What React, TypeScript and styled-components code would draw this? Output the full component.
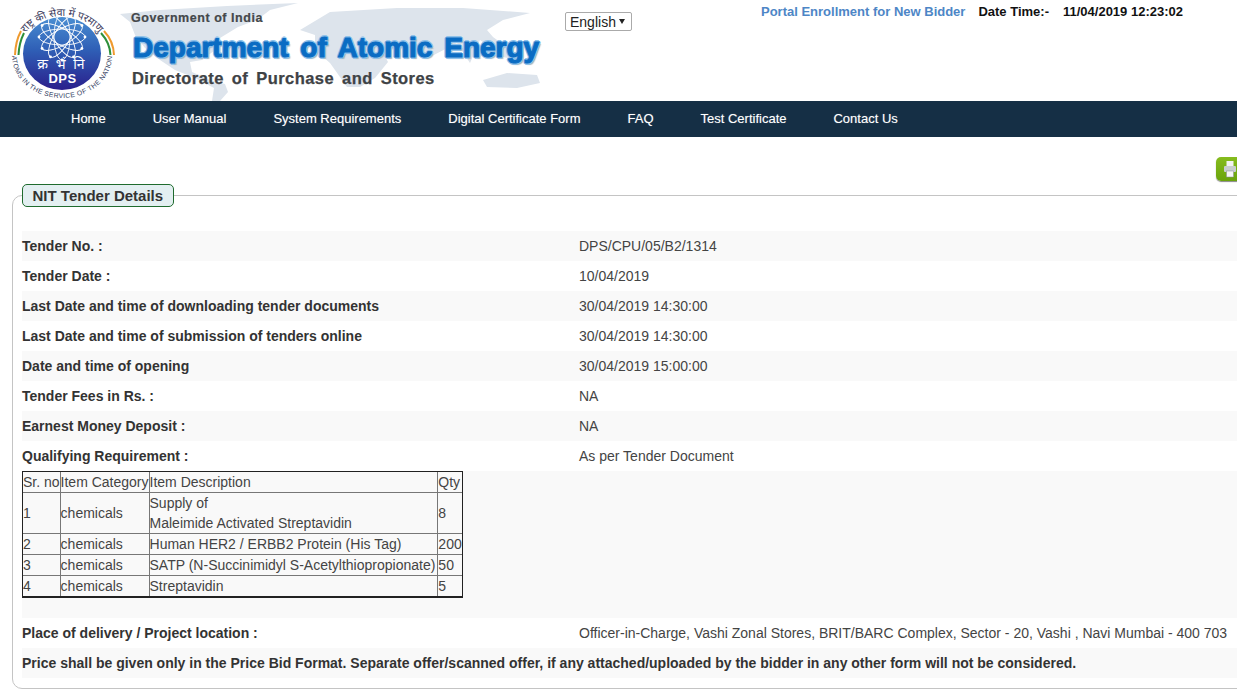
import React from "react";
import styled, { createGlobalStyle } from "styled-components";

const Global = createGlobalStyle`
  html, body { margin: 0; padding: 0; background: #fff; overflow: hidden; }
  body { font-family: "Liberation Sans", Arial, sans-serif; font-size: 14px; line-height: 20px; color: #333; }
`;
const Page = styled.div`width: 1237px; height: 693px; overflow: hidden;`;
const Header = styled.header`display: flex; height: 101px; align-items: flex-start;`;
const LogoBox = styled.div`width: 120px; height: 101px; flex: none;`;
const Brand = styled.div`
  position: relative; width: 430px; height: 101px; flex: none; padding: 9px 0 0 11px; box-sizing: border-box;
  font-family: "Liberation Sans", sans-serif; font-weight: 700;
`;
const MapArt = styled.svg`position: absolute; left: 0; top: 0; width: 430px; height: 101px;`;
const Gov = styled.div`position: relative; font-size: 12.5px; line-height: 18px; color: #44484b; letter-spacing: .55px; -webkit-text-stroke: .2px #44484b;`;
const Dept = styled.div`
  position: relative; margin: 4px 0 0 2px; font-size: 28px; line-height: 34px; color: #0a6cc3; white-space: nowrap; word-spacing: 4px;
  -webkit-text-stroke: 1.1px #0a6cc3;
  text-shadow: 1.6px 0 0 #8fc2ea, -1.6px 0 0 #8fc2ea, 0 1.6px 0 #8fc2ea, 0 -1.6px 0 #8fc2ea, 1.2px 1.2px 0 #8fc2ea, -1.2px 1.2px 0 #8fc2ea, 1.2px -1.2px 0 #8fc2ea, -1.2px -1.2px 0 #8fc2ea, 2px 2px 1px #a9b6c2;
`;
const Dir = styled.div`position: relative; margin: 2px 0 0 1px; font-size: 16.5px; line-height: 22px; color: #3e4245; white-space: nowrap; word-spacing: 3px; letter-spacing: .43px; -webkit-text-stroke: .25px #3e4245;`;
const Lang = styled.select`
  margin: 12px 0 0 15px; flex: none; width: 67px; height: 19px; padding: 0 0 0 4px; font: 14px "Liberation Sans", sans-serif; color: #222; border: 1px solid #aaa; border-radius: 2px;
  appearance: none; background: #fff url("data:image/svg+xml,%3Csvg xmlns='http://www.w3.org/2000/svg' width='6' height='5'%3E%3Cpath d='M0 0h6L3 5z' fill='%23222'/%3E%3C/svg%3E") no-repeat 53px 6px;
`;
const Status = styled.div`
  display: flex; align-items: baseline; margin: 2px 0 0 129px; font-weight: 700; font-size: 13px; color: #111; white-space: nowrap;
`;
const PortalLink = styled.a`color: #4d86c6; margin-right: 13px; font-size: 13px;`;
const StampLabel = styled.span`margin-right: 14px;`;
const Nav = styled.nav`display: flex; height: 36px; background: #152f45; padding-left: 47.5px; align-items: center;`;
const NavItem = styled.a`color: #fff; padding: 0 23.5px; font-size: 13px; white-space: nowrap; text-shadow: 0 0 1px rgba(255,255,255,.4);`;
const PrintRow = styled.div`display: flex; justify-content: flex-end; height: 24px; padding-top: 20px; margin-right: -6px;`;
const PrintBtn = styled.button`
  width: 27px; height: 24px; padding: 0; border: 0; border-radius: 5px; display: flex; align-items: center; justify-content: center;
  background: linear-gradient(#86bc1e, #6aa30c); box-shadow: 0 1px 1px #888;
`;
const Field = styled.fieldset`
  margin: 3px 0 0 12px; padding: 0 0 10px 9px; width: 1260px; box-sizing: border-box; height: 505px;
  border: 1px solid #c4c4c4; border-radius: 10px;
`;
const Legend = styled.legend`
  margin: 0 13px 0 0; padding: 0 9.500px; height: 23px; box-sizing: border-box; border: 1px solid #1f6b2e; border-radius: 5px;
  background: #e3eff1; font-weight: 700; font-size: 15px; line-height: 21px; color: #333;
`;
const Rows = styled.div`margin-top: 24px;`;
const Row = styled.div<{ $shade?: boolean }>`
  display: grid; grid-template-columns: 557px 1fr; min-height: 30px; align-items: center;
  background: ${p => (p.$shade ? "#f9f9f9" : "#fff")}; white-space: nowrap;
`;
const Label = styled.div`font-weight: 700;`;
const Value = styled.div`color: #444;`;
const Notice = styled.div`
  background: #f9f9f9; height: 30px; line-height: 30px; font-weight: 700; font-size: 14px; white-space: nowrap;
`;
const TableBand = styled.div`background: #f9f9f9; height: 147px;`;
const Items = styled.table`
  border-collapse: separate; border-spacing: 0; border: 1px solid #222; border-bottom-width: 2px; color: #444; font-size: 14px; line-height: 20px;
`;
const Cell = styled.td`
  padding: 0; white-space: nowrap; border-right: 1px solid #777; border-bottom: 1px solid #777;
  &:nth-child(3) { padding-right: 2px; }
  &:last-child { border-right: 0; }
  tr:last-child & { border-bottom: 0; }
`;

const RAY = [0, 30, 60, 90, 120, 150];

function Logo() {
  return (
    <svg width="120" height="101" viewBox="0 0 120 101">
      <defs>
        <linearGradient id="disc" x1="0" y1="0" x2="0" y2="1">
          <stop offset="0" stopColor="#4a8ed2" />
          <stop offset=".45" stopColor="#2f5fb6" />
          <stop offset="1" stopColor="#2a1f8c" />
        </linearGradient>
        <path id="topArc" d="M19 52 A43 36 0 0 1 105 52" />
        <path id="botArc" d="M12 56 A50 42 0 0 0 112 56" />
      </defs>
      <ellipse cx="62" cy="53.500" rx="39" ry="36.500" fill="url(#disc)" />
      <g fill="none" stroke="#fff" strokeWidth=".9">
        {RAY.map(a => (
          <ellipse key={a} cx="62" cy="37" rx="23" ry="8" transform={`rotate(${a} 62 37)`} />
        ))}
      </g>
      <g fill="#fff">
        {RAY.flatMap(a => [0, 180].map(b => {
          const t = ((a + b) * Math.PI) / 180;
          return <circle key={a + b} cx={62 + 23 * Math.cos(t)} cy={37 + 23 * Math.sin(t)} r="1.4" />;
        }))}
      </g>
      <g fill="none" strokeWidth="2">
        <path d="M15 55 Q15.500 41 21 31" stroke="#ef9a2e" />
        <path d="M18.500 55 Q19 43 24 33" stroke="#2d8f3a" />
        <path d="M114 55 Q113.500 41 104 31" stroke="#ef9a2e" />
        <path d="M110.500 55 Q110 43 101 33" stroke="#2d8f3a" />
      </g>
      <text x="62" y="69" textAnchor="middle" fill="#fff" fontSize="14" fontFamily="Noto Sans, DejaVu Sans, sans-serif" letterSpacing="2">क्र भं नि</text>
      <text x="62.500" y="83" textAnchor="middle" fill="#fff" fontSize="13" fontWeight="700" letterSpacing=".5" fontFamily="Liberation Sans, sans-serif">DPS</text>
      <text fill="#3b3b5c" fontSize="10.500" fontFamily="Noto Sans, DejaVu Sans, sans-serif">
        <textPath href="#topArc" startOffset="50%" textAnchor="middle">राष्ट्र की सेवा में परमाणु</textPath>
      </text>
      <text fill="#33415f" fontSize="6.800" letterSpacing=".35" fontFamily="Liberation Sans, sans-serif">
        <textPath href="#botArc" startOffset="50%" textAnchor="middle">ATOMS IN THE SERVICE OF THE NATION</textPath>
      </text>
    </svg>
  );
}

function WorldMap() {
  return (
    <MapArt viewBox="0 0 430 101">
      <g fill="#dde4ec">
        <path d="M0 14 L40 10 L107 6 L178 3 L150 10 L137 20 L118 27 L100 38 L95 50 L82 60 L70 62 L72 72 L90 80 L105 84 L108 92 L100 101 L92 101 L94 88 L75 78 L55 70 L40 60 L25 48 L15 35 L10 22 Z" />
        <path d="M180 30 L210 12 L277 8 L343 8 L410 13 L383 20 L367 30 L373 37 L407 62 L383 57 L360 40 L350 63 L337 43 L310 57 L290 48 L262 50 L268 62 L255 78 L240 87 L227 87 L215 70 L210 63 L195 50 L195 35 Z" />
        <path d="M363 80 L387 73 L417 75 L420 83 L397 88 L367 87 Z" />
      </g>
    </MapArt>
  );
}

const MENU = ["Home", "User Manual", "System Requirements", "Digital Certificate Form", "FAQ", "Test Certificate", "Contact Us"];
const TOP = [
  ["Tender No. :", "DPS/CPU/05/B2/1314"],
  ["Tender Date :", "10/04/2019"],
  ["Last Date and time of downloading tender documents", "30/04/2019 14:30:00"],
  ["Last Date and time of submission of tenders online", "30/04/2019 14:30:00"],
  ["Date and time of opening", "30/04/2019 15:00:00"],
  ["Tender Fees in Rs. :", "NA"],
  ["Earnest Money Deposit :", "NA"],
  ["Qualifying Requirement :", "As per Tender Document"],
];
const ITEMS: [string, string, React.ReactNode, string][] = [
  ["1", "chemicals", <>Supply of<br />Maleimide Activated Streptavidin</>, "8"],
  ["2", "chemicals", "Human HER2 / ERBB2 Protein (His Tag)", "200"],
  ["3", "chemicals", "SATP (N-Succinimidyl S-Acetylthiopropionate)", "50"],
  ["4", "chemicals", "Streptavidin", "5"],
];

export default function App() {
  return (
    <Page>
      <Global />
      <Header>
        <LogoBox><Logo /></LogoBox>
        <Brand>
          <WorldMap />
          <Gov>Government of India</Gov>
          <Dept>Department of Atomic Energy</Dept>
          <Dir>Directorate of Purchase and Stores</Dir>
        </Brand>
        <Lang defaultValue="English"><option>English</option></Lang>
        <Status>
          <PortalLink>Portal Enrollment for New Bidder</PortalLink>
          <StampLabel>Date Time:-</StampLabel>
          <span>11/04/2019 12:23:02</span>
        </Status>
      </Header>
      <Nav>{MENU.map(m => <NavItem key={m}>{m}</NavItem>)}</Nav>
      <PrintRow>
        <PrintBtn aria-label="Print">
          <svg width="14" height="18" viewBox="0 0 14 18">
            <rect x="3.500" y="1" width="7" height="6" fill="#f2f2f2" />
            <rect x="1" y="6" width="12" height="6" rx="1" fill="#c9ced0" />
            <rect x="3.500" y="11" width="7" height="6" fill="#f7f7f7" stroke="#889" strokeWidth=".5" />
          </svg>
        </PrintBtn>
      </PrintRow>
      <Field>
        <Legend>NIT Tender Details</Legend>
        <Rows>
          {TOP.map(([k, v], i) => (
            <Row key={k} $shade={i % 2 === 0}><Label>{k}</Label><Value>{v}</Value></Row>
          ))}
          <TableBand>
            <Items>
              <tbody>
                <tr><Cell>Sr. no</Cell><Cell>Item Category</Cell><Cell>Item Description</Cell><Cell>Qty</Cell></tr>
                {ITEMS.map(r => (
                  <tr key={r[0]}><Cell>{r[0]}</Cell><Cell>{r[1]}</Cell><Cell>{r[2]}</Cell><Cell>{r[3]}</Cell></tr>
                ))}
              </tbody>
            </Items>
          </TableBand>
          <Row>
            <Label>Place of delivery / Project location :</Label>
            <Value>Officer-in-Charge, Vashi Zonal Stores, BRIT/BARC Complex, Sector - 20, Vashi , Navi Mumbai - 400 703</Value>
          </Row>
          <Notice>Price shall be given only in the Price Bid Format. Separate offer/scanned offer, if any attached/uploaded by the bidder in any other form will not be considered.</Notice>
        </Rows>
      </Field>
    </Page>
  );
}
